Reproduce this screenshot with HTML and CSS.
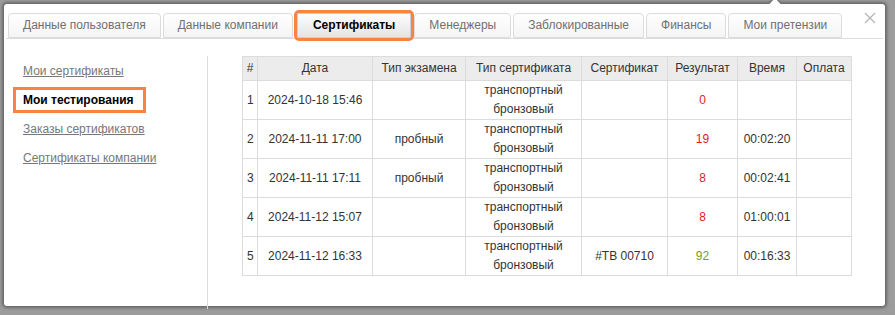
FILE: index.html
```html
<!DOCTYPE html>
<html lang="ru">
<head>
  <meta charset="UTF-8">
  <title>Сертификаты</title>
  <link rel="stylesheet" href="styles.css">
</head>
<body>

<div class="popup">
  <div class="notch"></div>
  <a class="close" href="#" title="Закрыть">
    <svg width="12" height="12" viewBox="0 0 12 12"><path d="M1 1L11 11M11 1L1 11" stroke="#b5b5b5" stroke-width="1.3" fill="none"/></svg>
  </a>

  <div class="tabs">
    <a class="tab" href="#">Данные пользователя</a>
    <a class="tab" href="#">Данные компании</a>
    <a class="tab active" href="#">Сертификаты</a>
    <a class="tab" href="#">Менеджеры</a>
    <a class="tab" href="#">Заблокированные</a>
    <a class="tab" href="#">Финансы</a>
    <a class="tab" href="#">Мои претензии</a>
  </div>

  <div class="content">
    <div class="side">
      <a href="#">Мои сертификаты</a>
      <a href="#" class="active">Мои тестирования</a>
      <a href="#">Заказы сертификатов</a>
      <a href="#">Сертификаты компании</a>
    </div>

    <div class="main">
      <table class="tests">
        <colgroup>
          <col style="width:15px">
          <col style="width:115px">
          <col style="width:93px">
          <col style="width:116px">
          <col style="width:86px">
          <col style="width:70px">
          <col style="width:59px">
          <col style="width:55px">
        </colgroup>
        <thead>
          <tr>
            <th>#</th><th>Дата</th><th>Тип экзамена</th><th>Тип сертификата</th>
            <th>Сертификат</th><th>Результат</th><th>Время</th><th>Оплата</th>
          </tr>
        </thead>
        <tbody>
          <tr>
            <td>1</td><td>2024-10-18 15:46</td><td></td><td>транспортный бронзовый</td>
            <td></td><td class="fail">0</td><td></td><td></td>
          </tr>
          <tr>
            <td>2</td><td>2024-11-11 17:00</td><td>пробный</td><td>транспортный бронзовый</td>
            <td></td><td class="fail">19</td><td>00:02:20</td><td></td>
          </tr>
          <tr>
            <td>3</td><td>2024-11-11 17:11</td><td>пробный</td><td>транспортный бронзовый</td>
            <td></td><td class="fail">8</td><td>00:02:41</td><td></td>
          </tr>
          <tr>
            <td>4</td><td>2024-11-12 15:07</td><td></td><td>транспортный бронзовый</td>
            <td></td><td class="fail">8</td><td>01:00:01</td><td></td>
          </tr>
          <tr>
            <td>5</td><td>2024-11-12 16:33</td><td></td><td>транспортный бронзовый</td>
            <td>#TB 00710</td><td class="pass">92</td><td>00:16:33</td><td></td>
          </tr>
        </tbody>
      </table>
    </div>
  </div>
</div>

</body>
</html>
```

FILE: styles.css
```css
html, body {
  margin: 0;
  height: 315px;
  overflow: hidden;
}
body {
  font-family: "Liberation Sans", Arial, sans-serif;
  font-size: 12px;
  color: #333;
  background-color: #9c9c9c;
  padding: 4px 10px 0 4px;
}
.popup {
  position: relative;
  height: 302px;
  background-color: #fff;
  border-radius: 3px;
  box-shadow: 0 0 3px 2px rgba(60, 60, 60, 0.55);
}
.notch {
  position: absolute;
  top: -4px;
  left: 767px;
  width: 8px;
  height: 8px;
  background-color: #fff;
  transform: rotate(45deg);
  box-shadow: -1px -1px 2px rgba(60, 60, 60, 0.45);
}
.close {
  position: absolute;
  top: 8px;
  right: 9px;
  display: block;
  width: 12px;
  height: 12px;
}
.close svg {
  display: block;
}

/* tabs */
.tabs {
  display: flex;
  margin: 0 2px;
  padding: 9px 0 0 2px;
  border-bottom: 1px solid #dcdcdc;
}
.tab {
  display: block;
  height: 23px;
  line-height: 23px;
  padding: 0 14px;
  margin-right: 2px;
  margin-bottom: -1px;
  border: 1px solid #dcdcdc;
  border-radius: 4px 4px 0 0;
  background: linear-gradient(#ffffff, #f4f4f4);
  color: #707070;
  text-decoration: none;
  white-space: nowrap;
}
.tab.active {
  margin: 0 3px 0 2px;
  padding: 0 15px;
  color: #000;
  font-weight: bold;
  background: linear-gradient(#fdfdfd, #e4e4e4);
  border-color: #d0d0d0;
  outline: 3px solid #f98441;
  outline-offset: 0;
  border-radius: 2px;
}

/* body */
.content {
  display: flex;
  margin-top: 17px;
}
.side {
  width: 184px;
  height: 252px;
  padding: 1px 0 0 19px;
  border-right: 1px solid #dcdcdc;
}
.side a {
  display: block;
  width: fit-content;
  line-height: 29px;
  color: #777;
  white-space: nowrap;
}
.side a.active {
  margin: 4px 0 5px -7px;
  padding: 0 9px 0 7px;
  line-height: 20px;
  color: #000;
  font-weight: bold;
  text-decoration: none;
  outline: 3px solid #f98441;
}
.main {
  padding-left: 34px;
}
.tests {
  table-layout: fixed;
  width: 610px;
  border-collapse: collapse;
  font-size: 12px;
  color: #333;
}
.tests th,
.tests td {
  border: 1px solid #dcdcdc;
  text-align: center;
  padding: 0 3px;
  line-height: 19px;
}
.tests th {
  background-color: #ececec;
  font-weight: normal;
  padding: 2px 3px 2px;
  white-space: nowrap;
}
.tests td:first-child {
  text-align: left;
  padding-left: 4px;
}
.tests .fail {
  color: #e11b1b;
}
.tests .pass {
  color: #6f9f2e;
}
```
